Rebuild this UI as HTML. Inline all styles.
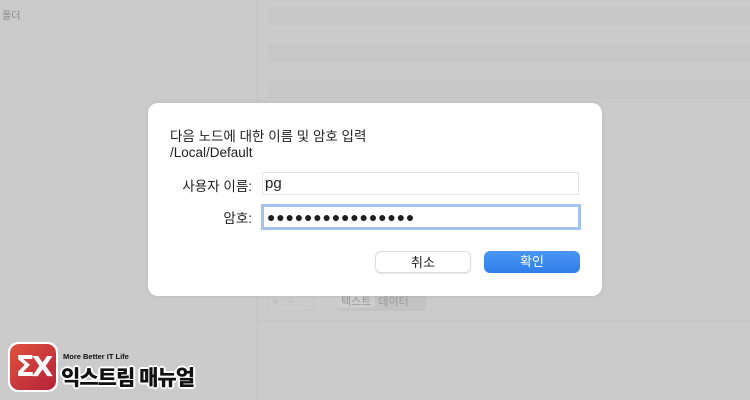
<!DOCTYPE html>
<html><head><meta charset="utf-8"><style>
*{margin:0;padding:0;box-sizing:border-box}
body{width:750px;height:400px;background:#cbcbcb;position:relative;overflow:hidden;font-family:"Liberation Sans","Noto Sans CJK KR",sans-serif;color:#1e1e1e}
.a{position:absolute}
.band{position:absolute;left:268px;right:0;height:18px;background:#c7c7c7}
.dlg{left:148px;top:103px;width:454px;height:193px;background:#fff;border-radius:10px;box-shadow:0 0 6px rgba(0,0,0,.08)}
.t{font-size:13.5px}
.inp{position:absolute;background:#fff;border:1px solid #e4e4e4;font-size:14px}
.btn{position:absolute;height:22px;border-radius:6px;font-size:13px;text-align:center;line-height:22px}
</style></head><body>
<div class="a" style="left:257px;top:0;width:1px;height:400px;background:#c2c2c2"></div>
<div class="a t" style="left:2px;top:7px;font-size:10px;color:#888">폴더</div>
<div class="band" style="top:7px"></div>
<div class="band" style="top:44px"></div>
<div class="band" style="top:81px"></div>
<div class="a" style="left:258px;right:0;top:321px;height:1px;background:#c3c3c3"></div>
<div class="a" style="left:267px;top:293px;width:47px;height:18px;border:1px solid #c6c6c6;border-radius:4px;color:#bbb;font-size:13px;line-height:15px">&nbsp;+ &nbsp;−</div>
<div class="a" style="left:337px;top:293px;width:89px;height:18px;background:#c3c3c3;border-radius:4px;font-size:11px;color:#999;line-height:18px"><span style="background:#cdcdcd;border-radius:3px;padding:0 4px">텍스트</span> 데이터</div>
<div class="a dlg"></div>
<div class="a t" style="left:170px;top:125px">다음 노드에 대한 이름 및 암호 입력</div>
<div class="a t" style="left:170px;top:145px">/Local/Default</div>
<div class="a t" style="left:176px;top:175px;width:76px;text-align:right">사용자 이름:</div>
<div class="inp" style="left:262px;top:172px;width:317px;height:23px;padding:2px 2px;font-size:15px">pg</div>
<div class="a t" style="left:176px;top:207px;width:76px;text-align:right">암호:</div>
<div class="inp" style="left:261px;top:204px;width:320px;height:26px;border:3px solid #a5c1ee;padding:0 3px;font-size:14px;line-height:20px;letter-spacing:0.8px">●●●●●●●●●●●●●●●●</div>
<div class="btn" style="left:375px;top:251px;width:96px;background:#fff;border:1px solid #ddd;box-shadow:0 1px 1px rgba(0,0,0,.1)">취소</div>
<div class="btn" style="left:484px;top:251px;width:96px;background:linear-gradient(#4b97f5,#2f7ee9);color:#fff">확인</div>
<div class="a" style="left:8px;top:342px;width:50px;height:50px;border-radius:10px;background:#fff"></div>
<div class="a" style="left:10px;top:344px;width:46px;height:46px;border-radius:9px;background:linear-gradient(135deg,#e0523d,#b5213a);color:#fff;font-weight:bold;font-size:28px;line-height:46px;text-align:center;font-family:'DejaVu Sans',sans-serif;letter-spacing:-3px">ΣX</div>
<div class="a" style="left:63px;top:352px;font-size:7.5px;font-weight:bold;color:#111">More Better IT Life</div>
<div class="a" style="left:61px;top:362px;font-size:21px;font-weight:900;color:#111;letter-spacing:-1px;text-shadow:1px 1px 0 #fff,-1px -1px 0 #fff,1px -1px 0 #fff,-1px 1px 0 #fff,2px 0 0 #fff,-2px 0 0 #fff,0 2px 0 #fff,0 -2px 0 #fff">익스트림 매뉴얼</div>
</body></html>
